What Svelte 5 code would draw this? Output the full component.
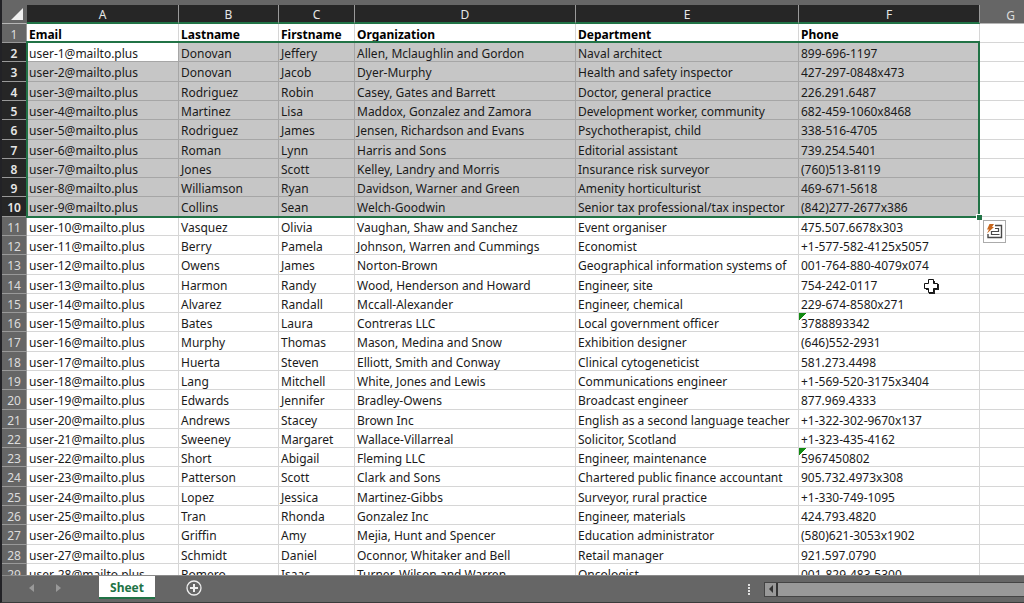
<script>
  const columns = ['A', 'B', 'C', 'D', 'E', 'F', 'G'];
  const titles = ['Email', 'Lastname', 'Firstname', 'Organization', 'Department', 'Phone', ''];

  const people = [
    ['Donovan', 'Jeffery', 'Allen, Mclaughlin and Gordon', 'Naval architect', '899-696-1197'],
    ['Donovan', 'Jacob', 'Dyer-Murphy', 'Health and safety inspector', '427-297-0848x473'],
    ['Rodriguez', 'Robin', 'Casey, Gates and Barrett', 'Doctor, general practice', '226.291.6487'],
    ['Martinez', 'Lisa', 'Maddox, Gonzalez and Zamora', 'Development worker, community', '682-459-1060x8468'],
    ['Rodriguez', 'James', 'Jensen, Richardson and Evans', 'Psychotherapist, child', '338-516-4705'],
    ['Roman', 'Lynn', 'Harris and Sons', 'Editorial assistant', '739.254.5401'],
    ['Jones', 'Scott', 'Kelley, Landry and Morris', 'Insurance risk surveyor', '(760)513-8119'],
    ['Williamson', 'Ryan', 'Davidson, Warner and Green', 'Amenity horticulturist', '469-671-5618'],
    ['Collins', 'Sean', 'Welch-Goodwin', 'Senior tax professional/tax inspector', '(842)277-2677x386'],
    ['Vasquez', 'Olivia', 'Vaughan, Shaw and Sanchez', 'Event organiser', '475.507.6678x303'],
    ['Berry', 'Pamela', 'Johnson, Warren and Cummings', 'Economist', '+1-577-582-4125x5057'],
    ['Owens', 'James', 'Norton-Brown', 'Geographical information systems of', '001-764-880-4079x074'],
    ['Harmon', 'Randy', 'Wood, Henderson and Howard', 'Engineer, site', '754-242-0117'],
    ['Alvarez', 'Randall', 'Mccall-Alexander', 'Engineer, chemical', '229-674-8580x271'],
    ['Bates', 'Laura', 'Contreras LLC', 'Local government officer', '3788893342'],
    ['Murphy', 'Thomas', 'Mason, Medina and Snow', 'Exhibition designer', '(646)552-2931'],
    ['Huerta', 'Steven', 'Elliott, Smith and Conway', 'Clinical cytogeneticist', '581.273.4498'],
    ['Lang', 'Mitchell', 'White, Jones and Lewis', 'Communications engineer', '+1-569-520-3175x3404'],
    ['Edwards', 'Jennifer', 'Bradley-Owens', 'Broadcast engineer', '877.969.4333'],
    ['Andrews', 'Stacey', 'Brown Inc', 'English as a second language teacher', '+1-322-302-9670x137'],
    ['Sweeney', 'Margaret', 'Wallace-Villarreal', 'Solicitor, Scotland', '+1-323-435-4162'],
    ['Short', 'Abigail', 'Fleming LLC', 'Engineer, maintenance', '5967450802'],
    ['Patterson', 'Scott', 'Clark and Sons', 'Chartered public finance accountant', '905.732.4973x308'],
    ['Lopez', 'Jessica', 'Martinez-Gibbs', 'Surveyor, rural practice', '+1-330-749-1095'],
    ['Tran', 'Rhonda', 'Gonzalez Inc', 'Engineer, materials', '424.793.4820'],
    ['Griffin', 'Amy', 'Mejia, Hunt and Spencer', 'Education administrator', '(580)621-3053x1902'],
    ['Schmidt', 'Daniel', 'Oconnor, Whitaker and Bell', 'Retail manager', '921.597.0790'],
    ['Romero', 'Isaac', 'Turner, Wilson and Warren', 'Oncologist', '001-829-483-5300']
  ];

  const rows = people.map((person, i) => [`user-${i + 1}@mailto.plus`, ...person, '']);

  // selection covers A2:F10
  const isSelected = (row, col) => row >= 2 && row <= 10 && col < 6;
  // numbers stored as text get the green corner
  const isFlagged = (value) => /^\d+$/.test(value);
</script>

<div class="window">
  <div class="sheet">
    <table>
      <colgroup>
        <col class="col-num" />
        {#each columns as letter}
          <col class="col-{letter.toLowerCase()}" />
        {/each}
      </colgroup>
      <thead>
        <tr>
          <th class="corner"><svg width="12" height="12" viewBox="0 0 12 12"><path d="M12 0V12H0Z" fill="#f0f0f0" /></svg></th>
          {#each columns as letter, c}
            <th class:active={c < 6} scope="col">{letter}</th>
          {/each}
        </tr>
      </thead>
      <tbody>
        <tr class="titles">
          <th scope="row">1</th>
          {#each titles as title}
            <td>{title}</td>
          {/each}
        </tr>
        {#each rows as row, r}
          <tr>
            <th class:active={r < 9} scope="row">{r + 2}</th>
            {#each row as value, c}
              <td
                class:selected={isSelected(r + 2, c)}
                class:current={r === 0 && c === 0}
                class:flagged={isFlagged(value)}>{value}</td>
            {/each}
          </tr>
        {/each}
      </tbody>
    </table>

    <div class="selection"><span class="handle"></span></div>

    <button class="quick" aria-label="Quick Analysis">
      <svg width="19" height="19" viewBox="0 0 19 19" fill="none">
        <path d="M10 3.500H16.500V15.500H3V12" stroke="#4a4a4a" stroke-width="1.400" />
        <path d="M10 6.500H13.500V9.500H6.500V12.500H14.500" stroke="#4a4a4a" stroke-width="1.200" />
        <path d="M4.500 2H9L7 5H9L2 11.500L4 7.500H2Z" fill="#c9681f" />
      </svg>
    </button>

    <svg class="pointer" width="17" height="17" viewBox="0 0 17 17">
      <path d="M6 3H12V6H16V12H12V16H6V12H3V6H6Z" fill="#222" />
      <path d="M5.500 1.500H10.500V5.500H14.500V10.500H10.500V14.500H5.500V10.500H1.500V5.500H5.500Z" fill="#fff" stroke="#111" />
    </svg>
  </div>

  <div class="bottom">
    <nav>
      <button class="step" aria-label="Previous sheet"><svg width="5" height="8" viewBox="0 0 5 8"><path d="M5 0V8L0 4Z" fill="#999" /></svg></button>
      <button class="step" aria-label="Next sheet"><svg width="5" height="8" viewBox="0 0 5 8"><path d="M0 0V8L5 4Z" fill="#999" /></svg></button>
      <button class="tab">Sheet</button>
      <button class="add" aria-label="New sheet">
        <svg width="16" height="16" viewBox="0 0 16 16" fill="none" stroke="#eee">
          <circle cx="8" cy="8" r="7" stroke-width="1.300" />
          <path d="M8 4V12M4 8H12" stroke-width="2" />
        </svg>
      </button>
    </nav>
    <div class="scroll">
      <svg class="dots" width="2" height="11" viewBox="0 0 2 11" fill="#e0e0e0"><path d="M0 0H2V2H0ZM0 3H2V5H0ZM0 6H2V8H0ZM0 9H2V11H0Z" /></svg>
      <div class="bar">
        <button aria-label="Scroll left"><svg width="4" height="8" viewBox="0 0 4 8"><path d="M4 0V8L0 4Z" fill="#333" /></svg></button>
        <div class="thumb"></div>
      </div>
    </div>
  </div>
</div>

<style>
  :global(body) {
    margin: 0;
    background: #666;
  }

  .window {
    display: flex;
    flex-direction: column;
    height: 100vh;
    box-sizing: border-box;
    padding-top: 5px;
    border-left: 2px solid #222226;
    border-bottom: 1px solid #3a3a3a;
    background: #666;
    font-family: "Noto Sans", "Open Sans", sans-serif;
    font-size: 12px;
    color: #1a1a1a;
    overflow: hidden;
  }

  button {
    padding: 0;
    border: 0;
    background: none;
    font: inherit;
  }

  svg {
    display: block;
  }

  .sheet {
    position: relative;
    flex: 1;
    min-height: 0;
    overflow: hidden;
    background: #fff;
    border-bottom: 1px solid #8a8a8a;
  }

  table {
    width: 100%;
    table-layout: fixed;
    border-collapse: separate;
    border-spacing: 0;
  }

  .col-num { width: 25px; }
  .col-a { width: 152px; }
  .col-b { width: 100px; }
  .col-c { width: 76px; }
  .col-d { width: 221px; }
  .col-e { width: 223px; }
  .col-f { width: 181px; }
  .col-g { width: 62px; }

  th,
  td {
    box-sizing: border-box;
    height: 19px;
    padding: 3px 0 0 2px;
    line-height: 15px;
    white-space: nowrap;
    overflow: hidden;
    text-align: left;
    vertical-align: top;
    border-right: 1px solid #d6d6d6;
    border-bottom: 1px solid #d6d6d6;
  }

  tbody tr:nth-child(7n + 3) > *,
  tbody tr:nth-child(7n + 6) > * {
    height: 20px;
  }

  th {
    padding-left: 0;
    text-align: center;
    font-weight: 400;
    color: #dcdcdc;
    background: #666;
    border-color: #999;
  }

  th.active {
    background: #262626;
    color: #e6e6e6;
  }

  tbody th.active {
    font-weight: 600;
  }

  thead th {
    border-bottom-color: #b5b5b5;
    border-right-color: #666;
  }

  thead th.active {
    border-right-color: #999;
    border-bottom: 2px solid #217346;
    line-height: 14px;
  }

  .corner svg {
    margin: 0 3px 0 auto;
  }

  .titles td {
    font-weight: 700;
    color: #000;
  }

  td.selected {
    background: #c6c6c6;
    border-color: #a6a6a6;
  }

  td.current {
    background: #fff;
  }

  td.flagged {
    background: linear-gradient(135deg, #128a12 5px, transparent 5px);
  }

  .selection {
    position: absolute;
    left: 24px;
    top: 36px;
    width: 950px;
    height: 173px;
    border: 2px solid #217346;
    pointer-events: none;
  }

  .handle {
    position: absolute;
    right: -4px;
    bottom: -4px;
    width: 5px;
    height: 5px;
    background: #217346;
    border: 1px solid #fff;
    border-width: 1px 0 0 1px;
  }

  .quick {
    position: absolute;
    left: 981px;
    top: 215px;
    width: 23px;
    height: 23px;
    padding: 1px;
    background: #fff;
    border: 1px solid #ababab;
  }

  .pointer {
    position: absolute;
    left: 921px;
    top: 273px;
  }

  .bottom {
    display: flex;
    justify-content: space-between;
    height: 26px;
  }

  nav {
    display: flex;
    align-items: flex-start;
    padding-left: 16px;
  }

  .step {
    display: flex;
    align-items: center;
    justify-content: center;
    width: 27px;
    height: 24px;
  }

  .tab {
    width: 56px;
    height: 23px;
    margin-left: 27px;
    padding-top: 2px;
    background: #fff;
    border-bottom: 2px solid #217346;
    color: #217346;
    font-weight: 700;
  }

  .add {
    height: 24px;
    margin-left: 31px;
  }

  .scroll {
    display: flex;
    align-items: center;
    gap: 14px;
    width: 27%;
  }

  .bar {
    display: flex;
    flex: 1;
    height: 13px;
    border: 1px solid #444;
    border-right: 0;
    background: #999;
  }

  .bar button {
    display: flex;
    align-items: center;
    justify-content: center;
    width: 13px;
    border-right: 2px solid #333;
  }

  .thumb {
    flex: 1;
    background: #999;
  }
</style>
